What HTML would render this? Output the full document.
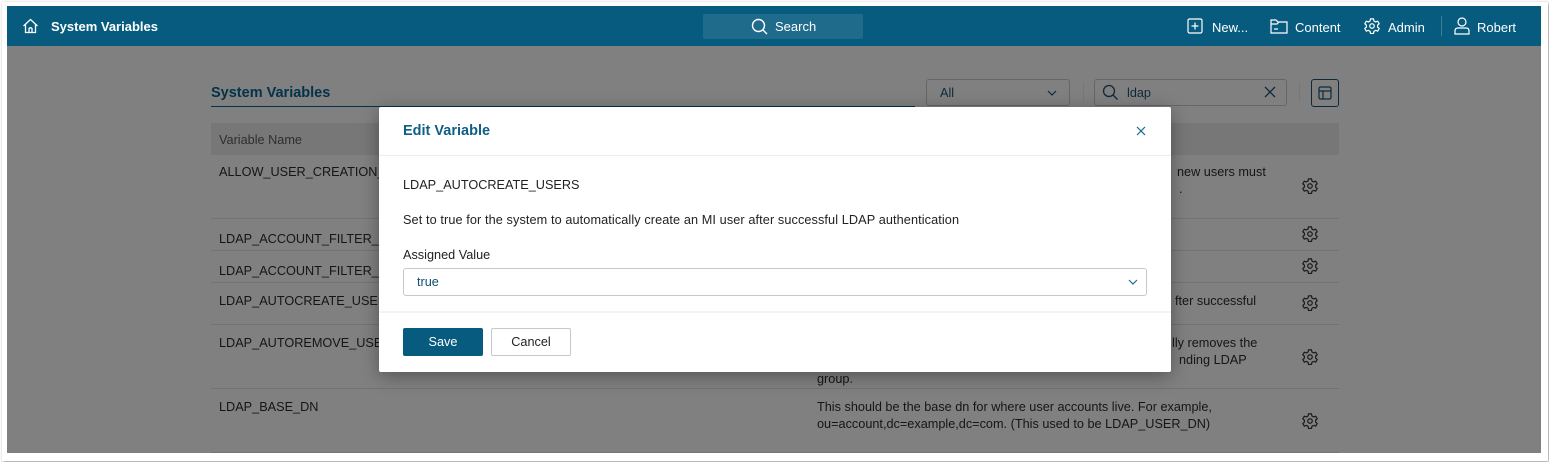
<!DOCTYPE html>
<html><head><meta charset="utf-8"><style>
*{box-sizing:border-box;margin:0;padding:0}
body{width:1549px;height:462px;background:#fff;font-family:"Liberation Sans",sans-serif;position:relative;overflow:hidden}
.a{position:absolute}
.frame{left:0;top:0;width:1549px;height:462px;background:#fff}
.shadow{left:2px;top:2px;width:1546px;height:459px;box-shadow:1px 1px 3px rgba(0,0,0,.45);background:#fff}
.app{left:7px;top:6px;width:1534px;height:447px;background:#808080;overflow:hidden}
.hdr{left:0;top:0;width:1534px;height:40px;background:#075b7e;color:#fff;font-size:13px}
.t{font-size:12.7px;color:#151515;white-space:nowrap}
.line{height:1px;background:#737373}
.gear{width:18px;height:18px}
.modal{left:379px;top:107px;width:792px;height:265px;background:#fff;box-shadow:0 4px 18px rgba(0,0,0,.35);border-radius:2px}
</style></head><body>
<div class="a frame"></div>
<div class="a shadow"></div>
<div class="a app">
 <div class="a hdr">
  <svg class="a" style="left:15px;top:12px" width="17" height="16" viewBox="0 0 17 16" fill="none" stroke="#fff" stroke-width="1.3"><path d="M1.5 8 L8.5 1.5 L15.5 8"/><path d="M3.5 6.5 V14.5 H13.5 V6.5"/><path d="M7 14.5 V10.5 Q8.5 9 10 10.5 V14.5"/></svg>
  <div class="a" style="left:44px;top:13px;font-weight:bold;font-size:13px">System Variables</div>
  <div class="a" style="left:696px;top:8px;width:160px;height:25px;background:#1f6b8b;border-radius:2px"></div>
  <svg class="a" style="left:744px;top:12px" width="18" height="18" viewBox="0 0 18 18" fill="none" stroke="#fff" stroke-width="1.4"><circle cx="7.5" cy="7.5" r="6"/><path d="M12 12 L16 16"/></svg>
  <div class="a" style="left:768px;top:13px">Search</div>
  <svg class="a" style="left:1180px;top:12px" width="16" height="16" viewBox="0 0 16 16" fill="none" stroke="#fff" stroke-width="1.2"><rect x="1" y="1" width="14" height="14" rx="1.5"/><path d="M8 4.5 V11.5 M4.5 8 H11.5"/></svg>
  <div class="a" style="left:1205px;top:14px">New...</div>
  <svg class="a" style="left:1263px;top:12px" width="18" height="16" viewBox="0 0 18 16" fill="none" stroke="#fff" stroke-width="1.2"><path d="M1 2 H6 L8 4 H17 V15 H1 Z"/><path d="M1 6 H7 L9 4"/><path d="M4 11 H8"/></svg>
  <div class="a" style="left:1288px;top:14px">Content</div>
  <svg class="a" style="left:1356px;top:11px" width="18" height="18" viewBox="0 0 24 24" fill="none" stroke="#fff" stroke-width="1.6"><circle cx="12" cy="12" r="3"/><path d="M10 2.5h4l.6 2.8 2.3 1.3 2.7-1 2 3.4-2.1 1.9v2.6l2.1 1.9-2 3.4-2.7-1-2.3 1.3-.6 2.8h-4l-.6-2.8-2.3-1.3-2.7 1-2-3.4 2.1-1.9v-2.6L2.4 9l2-3.4 2.7 1 2.3-1.3z"/></svg>
  <div class="a" style="left:1381px;top:14px">Admin</div>
  <div class="a" style="left:1434px;top:10px;width:1px;height:20px;background:#3c7d99"></div>
  <svg class="a" style="left:1447px;top:11px" width="16" height="18" viewBox="0 0 16 18" fill="none" stroke="#fff" stroke-width="1.2"><circle cx="8" cy="5" r="4"/><path d="M1 17 V14 Q1 11 4 11 H12 Q15 11 15 14 V17 Z"/></svg>
  <div class="a" style="left:1470px;top:14px">Robert</div>
 </div>
 <div class="a" style="left:204px;top:79px;font-size:14.5px;font-weight:bold;color:#03324a">System Variables</div>
 <div class="a" style="left:204px;top:100px;width:704px;height:1px;background:#03324a"></div>
 <div class="a" style="left:919px;top:73px;width:144px;height:27px;border:1px solid #666;border-radius:3px"></div>
 <div class="a t" style="left:933px;top:80px;color:#0e2a3a">All</div>
 <svg class="a" style="left:1040px;top:84px" width="10" height="6" viewBox="0 0 10 6" fill="none" stroke="#0e2a3a" stroke-width="1.2"><path d="M1 1 L5 5 L9 1"/></svg>
 <div class="a" style="left:1076px;top:76px;width:1px;height:20px;background:#777"></div>
 <div class="a" style="left:1087px;top:73px;width:193px;height:27px;border:1px solid #666;border-radius:3px"></div>
 <svg class="a" style="left:1095px;top:78px" width="17" height="17" viewBox="0 0 17 17" fill="none" stroke="#0e2a3a" stroke-width="1.3"><circle cx="7" cy="7" r="5.5"/><path d="M11 11 L15.5 15.5"/></svg>
 <div class="a t" style="left:1120px;top:80px;color:#0e2a3a">ldap</div>
 <svg class="a" style="left:1257px;top:80px" width="12" height="12" viewBox="0 0 12 12" stroke="#0e2a3a" stroke-width="1.3"><path d="M1 1 L11 11 M11 1 L1 11"/></svg>
 <div class="a" style="left:1292px;top:76px;width:1px;height:20px;background:#777"></div>
 <div class="a" style="left:1304px;top:73px;width:28px;height:28px;border:1px solid #0e2a3a;border-radius:3px"></div>
 <svg class="a" style="left:1311px;top:80px" width="14" height="14" viewBox="0 0 14 14" fill="none" stroke="#0e2a3a" stroke-width="1.2"><rect x="1" y="1" width="12" height="12" rx="1.5"/><path d="M1 5 H13 M5 5 V13"/></svg>
 <div class="a" style="left:204px;top:117px;width:1128px;height:32px;background:#777"></div>
 <div class="a t" style="left:212px;top:127px;color:#2e2e2e">Variable Name</div>
 <div class="a t" style="left:212px;top:159px">ALLOW_USER_CREATION_VIA</div>
 <div class="a line" style="left:204px;top:212px;width:1128px"></div>
 <div class="a t" style="left:212px;top:226px">LDAP_ACCOUNT_FILTER_FO</div>
 <div class="a line" style="left:204px;top:244px;width:1128px"></div>
 <div class="a t" style="left:212px;top:258px">LDAP_ACCOUNT_FILTER_FO</div>
 <div class="a line" style="left:204px;top:276px;width:1128px"></div>
 <div class="a t" style="left:212px;top:288px">LDAP_AUTOCREATE_USERS</div>
 <div class="a line" style="left:204px;top:318px;width:1128px"></div>
 <div class="a t" style="left:212px;top:330px">LDAP_AUTOREMOVE_USERS</div>
 <div class="a line" style="left:204px;top:382px;width:1128px"></div>
 <div class="a t" style="left:212px;top:394px">LDAP_BASE_DN</div>
 <div class="a line" style="left:204px;top:446px;width:1128px"></div>
 <div class="a t" style="left:1170px;top:159px">new users must</div>
 <div class="a t" style="left:1172px;top:176px">.</div>
 <div class="a t" style="left:1168px;top:288px">fter successful</div>
 <div class="a t" style="left:1165px;top:330px">lly removes the</div>
 <div class="a t" style="left:1172px;top:347px">nding LDAP</div>
 <div class="a t" style="left:810px;top:366px">group.</div>
 <div class="a t" style="left:810px;top:394px">This should be the base dn for where user accounts live. For example,</div>
 <div class="a t" style="left:810px;top:411px">ou=account,dc=example,dc=com. (This used to be LDAP_USER_DN)</div>
 <svg class="a gear" style="left:1294px;top:171px" viewBox="0 0 24 24" fill="none" stroke="#1a1a1a" stroke-width="1.6"><circle cx="12" cy="12" r="3"/><path d="M10 2.5h4l.6 2.8 2.3 1.3 2.7-1 2 3.4-2.1 1.9v2.6l2.1 1.9-2 3.4-2.7-1-2.3 1.3-.6 2.8h-4l-.6-2.8-2.3-1.3-2.7 1-2-3.4 2.1-1.9v-2.6L2.4 9l2-3.4 2.7 1 2.3-1.3z"/></svg>
 <svg class="a gear" style="left:1294px;top:219px" viewBox="0 0 24 24" fill="none" stroke="#1a1a1a" stroke-width="1.6"><circle cx="12" cy="12" r="3"/><path d="M10 2.5h4l.6 2.8 2.3 1.3 2.7-1 2 3.4-2.1 1.9v2.6l2.1 1.9-2 3.4-2.7-1-2.3 1.3-.6 2.8h-4l-.6-2.8-2.3-1.3-2.7 1-2-3.4 2.1-1.9v-2.6L2.4 9l2-3.4 2.7 1 2.3-1.3z"/></svg>
 <svg class="a gear" style="left:1294px;top:251px" viewBox="0 0 24 24" fill="none" stroke="#1a1a1a" stroke-width="1.6"><circle cx="12" cy="12" r="3"/><path d="M10 2.5h4l.6 2.8 2.3 1.3 2.7-1 2 3.4-2.1 1.9v2.6l2.1 1.9-2 3.4-2.7-1-2.3 1.3-.6 2.8h-4l-.6-2.8-2.3-1.3-2.7 1-2-3.4 2.1-1.9v-2.6L2.4 9l2-3.4 2.7 1 2.3-1.3z"/></svg>
 <svg class="a gear" style="left:1294px;top:288px" viewBox="0 0 24 24" fill="none" stroke="#1a1a1a" stroke-width="1.6"><circle cx="12" cy="12" r="3"/><path d="M10 2.5h4l.6 2.8 2.3 1.3 2.7-1 2 3.4-2.1 1.9v2.6l2.1 1.9-2 3.4-2.7-1-2.3 1.3-.6 2.8h-4l-.6-2.8-2.3-1.3-2.7 1-2-3.4 2.1-1.9v-2.6L2.4 9l2-3.4 2.7 1 2.3-1.3z"/></svg>
 <svg class="a gear" style="left:1294px;top:342px" viewBox="0 0 24 24" fill="none" stroke="#1a1a1a" stroke-width="1.6"><circle cx="12" cy="12" r="3"/><path d="M10 2.5h4l.6 2.8 2.3 1.3 2.7-1 2 3.4-2.1 1.9v2.6l2.1 1.9-2 3.4-2.7-1-2.3 1.3-.6 2.8h-4l-.6-2.8-2.3-1.3-2.7 1-2-3.4 2.1-1.9v-2.6L2.4 9l2-3.4 2.7 1 2.3-1.3z"/></svg>
 <svg class="a gear" style="left:1294px;top:406px" viewBox="0 0 24 24" fill="none" stroke="#1a1a1a" stroke-width="1.6"><circle cx="12" cy="12" r="3"/><path d="M10 2.5h4l.6 2.8 2.3 1.3 2.7-1 2 3.4-2.1 1.9v2.6l2.1 1.9-2 3.4-2.7-1-2.3 1.3-.6 2.8h-4l-.6-2.8-2.3-1.3-2.7 1-2-3.4 2.1-1.9v-2.6L2.4 9l2-3.4 2.7 1 2.3-1.3z"/></svg>
</div>
<div class="a modal">
 <div class="a" style="left:24px;top:16px;font-size:14.5px;font-weight:bold;color:#0f5f84">Edit Variable</div>
 <svg class="a" style="left:757px;top:19px" width="10" height="10" viewBox="0 0 10 10" stroke="#1a6a8e" stroke-width="1.2"><path d="M1 1 L9 9 M9 1 L1 9"/></svg>
 <div class="a" style="left:0;top:48px;width:792px;height:1px;background:#ececec"></div>
 <div class="a t" style="left:24px;top:71px;color:#222">LDAP_AUTOCREATE_USERS</div>
 <div class="a t" style="left:24px;top:106px;color:#222;letter-spacing:0.1px">Set to true for the system to automatically create an MI user after successful LDAP authentication</div>
 <div class="a t" style="left:24px;top:141px;color:#222">Assigned Value</div>
 <div class="a" style="left:24px;top:161px;width:744px;height:28px;border:1px solid #c8c8c8;border-radius:3px"></div>
 <div class="a t" style="left:38px;top:168px;color:#0f4e6e">true</div>
 <svg class="a" style="left:749px;top:172px" width="10" height="6" viewBox="0 0 10 6" fill="none" stroke="#1a6a8e" stroke-width="1.2"><path d="M1 1 L5 5 L9 1"/></svg>
 <div class="a" style="left:0;top:204px;width:792px;height:2px;background:#f3f3f3"></div>
 <div class="a" style="left:24px;top:221px;width:80px;height:28px;background:#075b7e;border-radius:2px;color:#fff;font-size:12.7px;text-align:center;line-height:28px">Save</div>
 <div class="a" style="left:112px;top:221px;width:80px;height:28px;border:1px solid #c8c8c8;border-radius:2px;color:#222;font-size:12.7px;text-align:center;line-height:26px">Cancel</div>
</div>
</body></html>
